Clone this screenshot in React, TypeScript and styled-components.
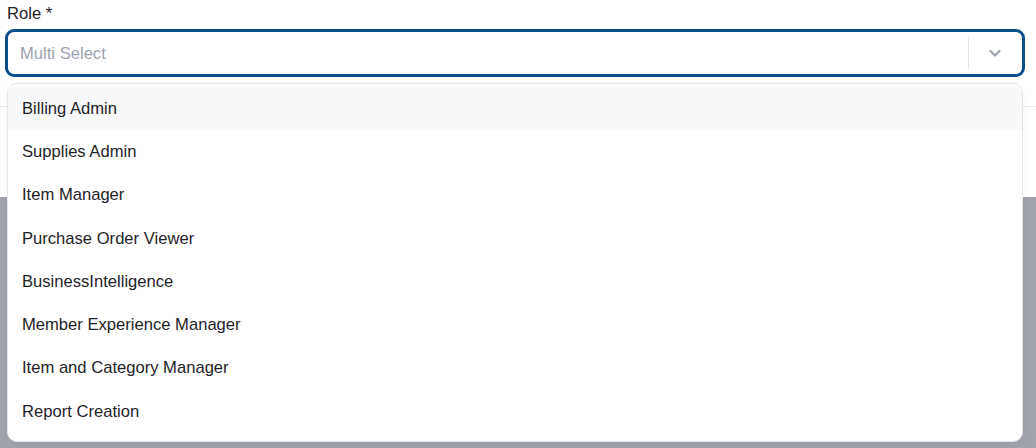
import styled, { createGlobalStyle } from 'styled-components';

const GlobalStyle = createGlobalStyle`
  html, body {
    margin: 0;
    padding: 0;
    background: #ffffff;
  }
  body {
    font-family: 'Liberation Sans', Arial, sans-serif;
  }
`;

const Page = styled.div`
  position: relative;
  height: 100vh;
  display: flex;
  flex-direction: column;
  overflow: hidden;
`;

const Panel = styled.div`
  background: #ffffff;
`;

const Backdrop = styled.div`
  flex: 1;
  background: #a1a3ab;
`;

const FieldArea = styled.div`
  padding: 4px 11px 29px 5px;
`;

const Label = styled.label`
  display: block;
  padding-left: 2px;
  margin-bottom: 5px;
  font-size: 16.6px;
  line-height: 20px;
  font-weight: 500;
  color: #1f2328;
`;

const SelectBox = styled.div`
  display: flex;
  align-items: center;
  height: 48px;
  box-sizing: border-box;
  border: 3px solid #0a4e8c;
  border-radius: 9px;
  background: #ffffff;
`;

const Placeholder = styled.span`
  flex: 1;
  padding: 2px 0 0 12px;
  font-size: 16.6px;
  color: #9ca3af;
`;

const Separator = styled.span`
  width: 1px;
  align-self: stretch;
  margin: 5px 0;
  background: #e3e5e8;
`;

const Chevron = styled.span`
  width: 53px;
  padding-right: 2px;
  box-sizing: border-box;
  display: flex;
  align-items: center;
  justify-content: center;
  color: #9ca3af;
`;

const Footer = styled.div`
  height: 90px;
  border-top: 1px solid #e5e7eb;
`;

const Menu = styled.ul`
  position: absolute;
  z-index: 10;
  top: 83px;
  left: 7px;
  right: 13px;
  margin: 0;
  padding: 3px 0 8px;
  list-style: none;
  background: #ffffff;
  border: 1px solid #e4e6ea;
  border-radius: 10px;
  box-shadow: 0 2px 6px rgba(0, 0, 0, 0.04);
`;

const Item = styled.li<{ $active?: boolean }>`
  height: 43.3px;
  display: flex;
  align-items: center;
  padding-left: 14px;
  font-size: 16.6px;
  color: #1f2328;
  background: ${({ $active }) => ($active ? '#f7f8fa' : 'transparent')};
`;

const ROLES = [
  'Billing Admin',
  'Supplies Admin',
  'Item Manager',
  'Purchase Order Viewer',
  'BusinessIntelligence',
  'Member Experience Manager',
  'Item and Category Manager',
  'Report Creation',
];

export default function App() {
  return (
    <>
      <GlobalStyle />
      <Page>
        <Panel>
          <FieldArea>
            <Label>Role *</Label>
            <SelectBox>
              <Placeholder>Multi Select</Placeholder>
              <Separator />
              <Chevron>
                <svg width="14" height="14" viewBox="0 0 14 14" fill="none">
                  <path d="M2.5 5l4.5 4.5L11.5 5" stroke="currentColor" strokeWidth="2.2" strokeLinecap="round" strokeLinejoin="round" />
                </svg>
              </Chevron>
            </SelectBox>
          </FieldArea>
          <Footer />
        </Panel>
        <Backdrop />
        <Menu>
          {ROLES.map((r, i) => (
            <Item key={r} $active={i === 0}>{r}</Item>
          ))}
        </Menu>
      </Page>
    </>
  );
}
